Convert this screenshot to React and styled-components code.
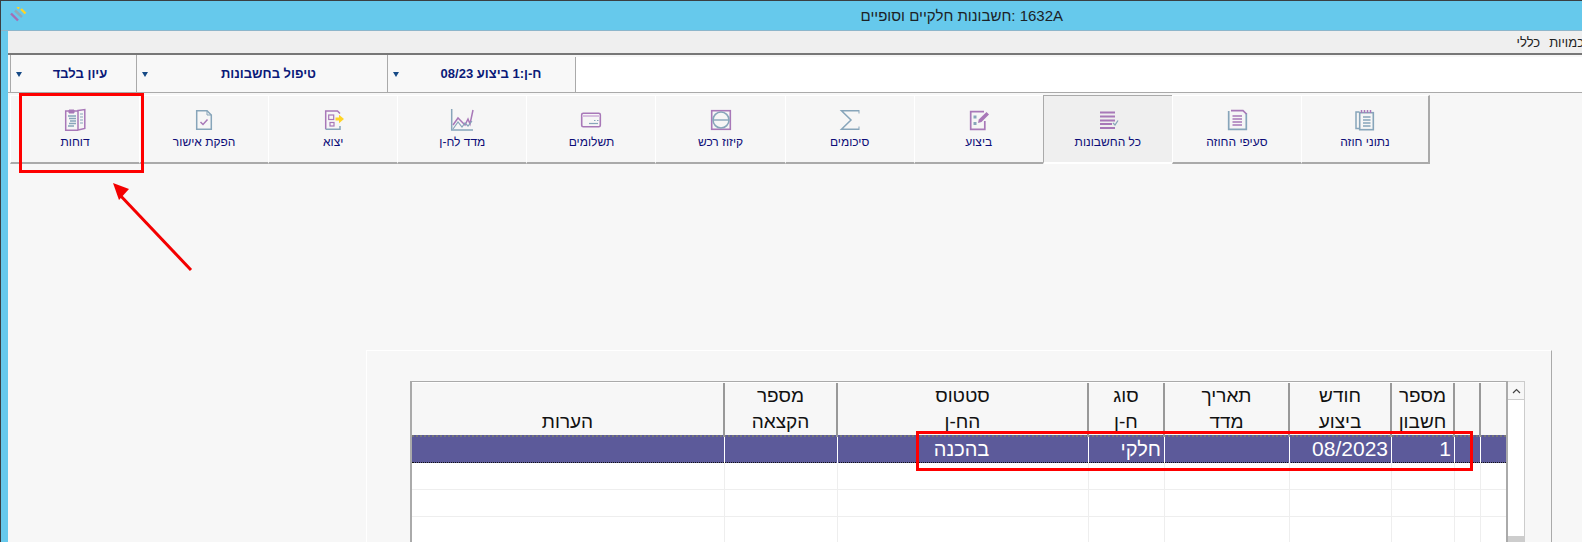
import React from 'react';
import styled, { createGlobalStyle } from 'styled-components';

const PURPLE = '#a878b8';
const STEEL = '#87a5ba';

const GlobalStyle = createGlobalStyle`
  html, body {
    margin: 0;
    padding: 0;
    background: #f7f7f7;
    font-family: "Liberation Sans", Arial, sans-serif;
  }
`;

const Icon = ({ children }) => (
  <svg width="24" height="24" viewBox="0 0 24 24" fill="none" strokeWidth="1.5">
    {children}
  </svg>
);

const ReportsIcon = () => (
  <Icon>
    <path d="M15 3H2.7V22.3H15" stroke={PURPLE} />
    <path d="M15 2.5L21.8 1.5V20.5L15 22Z" stroke={PURPLE} />
    <path d="M6 2H11V5H6Z" fill={PURPLE} stroke={PURPLE} strokeWidth="1" />
    <path d="M5 8H13M6 10.5H13M7 13H13M6 15.5H13M5 18H11" stroke={STEEL} />
    <path d="M17 6H20M17 9H20M17 12H20M17 15H20" stroke={STEEL} strokeWidth="1" />
  </Icon>
);

const ApprovalIcon = () => (
  <Icon>
    <path d="M4.7 2.7H15L19.3 7V21.3H4.7Z" stroke={STEEL} />
    <path d="M15 2.7V7H19.3" stroke={STEEL} strokeWidth="1" />
    <path d="M8.5 14L11 16.5L15.5 11.5" stroke={PURPLE} />
  </Icon>
);

const ExportIcon = () => (
  <Icon>
    <path d="M4.7 21.3V3H16.5L19 5.5" stroke={PURPLE} />
    <path d="M4.7 21.3H19V18" stroke={STEEL} />
    <rect x="7.7" y="7" width="5" height="4.5" stroke={PURPLE} strokeWidth="1.2" />
    <rect x="9" y="14.5" width="4" height="3.5" stroke={PURPLE} strokeWidth="1.2" />
    <path d="M14.5 9.5H18V6.8L23 11L18 15.2V12.5H14.5Z" fill="#ffd426" />
  </Icon>
);

const IndexIcon = () => (
  <Icon>
    <path d="M1.7 1V22H23" stroke={STEEL} />
    <path d="M3 17L8 10L12 14L15 17L18 11L20 16L23 2" stroke={PURPLE} />
    <path d="M3 21L8 14L12 19L15 15L18 18L22 13" stroke={STEEL} strokeWidth="1.2" />
  </Icon>
);

const PaymentsIcon = () => (
  <Icon>
    <rect x="2.7" y="5.2" width="18.6" height="13.6" rx="1.5" stroke={PURPLE} strokeWidth="1.6" />
    <path d="M3 8H21" stroke="#d8bfe0" strokeWidth="2" />
    <path d="M10 15.5H19" stroke={STEEL} strokeWidth="1.2" />
    <path d="M15 12.5H16.5M18 12.5H19.5" stroke={STEEL} strokeWidth="1.2" />
  </Icon>
);

const OffsetIcon = () => (
  <Icon>
    <rect x="2.7" y="2.7" width="18.6" height="18.6" stroke={PURPLE} strokeWidth="1.6" />
    <circle cx="12" cy="12" r="8" stroke={STEEL} strokeWidth="1.6" />
    <path d="M4 12H20" stroke={STEEL} strokeWidth="1.4" />
  </Icon>
);

const SumIcon = () => (
  <Icon>
    <path d="M21 2.7H3.5L13 12L3.5 21.3H21" stroke={STEEL} strokeWidth="1.5" />
    <path d="M21 2V5.5M21 18.5V22" stroke={STEEL} strokeWidth="1" />
  </Icon>
);

const ExecutionIcon = () => (
  <Icon>
    <path d="M17 3.7H3.7V21.3H17.8V13" stroke={PURPLE} strokeWidth="1.7" />
    <path d="M11 15L11.8 11.5L19.5 4L22 6.5L14.5 14Z" fill={PURPLE} />
    <rect x="6.5" y="7.5" width="3" height="3" fill={STEEL} />
    <rect x="6.5" y="14" width="3" height="3" fill={STEEL} />
  </Icon>
);

const AllAccountsIcon = () => (
  <Icon>
    <path d="M4 4.5H19M4 8.5H19M4 12.5H19M4 16H16M4 20H19" stroke={PURPLE} strokeWidth="2" />
    <path d="M17 15L19 17L22 12.5" stroke={STEEL} strokeWidth="1.3" />
  </Icon>
);

const SectionsIcon = () => (
  <Icon>
    <path d="M3.7 3V21.3H21.3V5" stroke={STEEL} strokeWidth="1.7" />
    <path d="M6 2.7H18L21.5 6" stroke={PURPLE} strokeWidth="1.7" />
    <path d="M7.5 8H17M7.5 11H17M7.5 14H17M7.5 17H17" stroke={PURPLE} strokeWidth="1.5" />
  </Icon>
);

const ContractIcon = () => (
  <Icon>
    <path d="M6.5 4H3V20.5H7" stroke={STEEL} strokeWidth="1.5" />
    <rect x="6.7" y="4.7" width="13.6" height="17" stroke={STEEL} strokeWidth="1.6" />
    <path d="M8.5 2V5M11.5 2V5M14.5 2V5M17.5 2V5" stroke={PURPLE} strokeWidth="1.5" />
    <path d="M10 9H17.5M10 12H17.5M10 15H17.5M10 18H17.5" stroke={STEEL} strokeWidth="1.3" />
  </Icon>
);

const TABS = [
  { label: 'דוחות', icon: <ReportsIcon /> },
  { label: 'הפקת אישור', icon: <ApprovalIcon /> },
  { label: 'יצוא', icon: <ExportIcon /> },
  { label: 'מדד לח-ן', icon: <IndexIcon /> },
  { label: 'תשלומים', icon: <PaymentsIcon /> },
  { label: 'קיזוז רכש', icon: <OffsetIcon /> },
  { label: 'סיכומים', icon: <SumIcon /> },
  { label: 'ביצוע', icon: <ExecutionIcon /> },
  { label: 'כל החשבונות', icon: <AllAccountsIcon />, active: true },
  { label: 'סעיפי החוזה', icon: <SectionsIcon /> },
  { label: 'נתוני חוזה', icon: <ContractIcon />, last: true },
];

const COLUMNS = [
  { head: 'הערות' },
  { head: 'מספר\nהקצאה' },
  { head: 'סטטוס\nהח-ן', value: 'בהכנה', center: true },
  { head: 'סוג\nח-ן', value: 'חלקי' },
  { head: 'תאריך\nמדד' },
  { head: 'חודש\nביצוע', value: '08/2023', digits: true },
  { head: 'מספר\nחשבון', value: '1', digits: true },
  { head: '' },
  { head: '' },
];

const App = () => {
  return (
    <>
      <GlobalStyle />
      <Window>
        <TitleBar>
          <svg width="18" height="16" viewBox="0 0 18 16">
            <path d="M1 6.5L8 13.5" stroke="#a56fb4" strokeWidth="2.4" />
            <path d="M5 3.5L12 10" stroke="#8fa8b8" strokeWidth="2.4" />
            <path d="M11 2L15.5 6.5" stroke="#ffd426" strokeWidth="2.4" />
            <path d="M7.5 1.5L9 0" stroke="#ffd426" strokeWidth="2.4" />
          </svg>
          <Title>1632A :חשבונות חלקיים וסופיים</Title>
        </TitleBar>
        <Body>
          <MenuBar>
            <MenuItem>כמויות</MenuItem>
            <MenuItem>כללי</MenuItem>
          </MenuBar>
          <Toolbar>
            <Select $width={126} $offset={13}>
              <Caret />
              <span>עיון בלבד</span>
            </Select>
            <Select $width={251} $offset={13}>
              <Caret />
              <span>טיפול בחשבונות</span>
            </Select>
            <Select $width={188} $offset={19}>
              <Caret />
              <span>ח-ן:1 ביצוע 08/23</span>
            </Select>
            <Blank />
          </Toolbar>
          <TabStrip>
            {TABS.map((tab) => (
              <Tab key={tab.label} $active={tab.active} $last={tab.last}>
                {tab.icon}
                <TabLabel>{tab.label}</TabLabel>
              </Tab>
            ))}
          </TabStrip>
          <Panel>
            <Table>
              <Grid>
                <HeaderRow>
                  {COLUMNS.map((col, i) => (
                    <HeaderCell key={i}>{col.head}</HeaderCell>
                  ))}
                </HeaderRow>
                <SelectedRow>
                  {COLUMNS.map((col, i) => (
                    <Cell key={i} $center={col.center} $digits={col.digits}>{col.value}</Cell>
                  ))}
                </SelectedRow>
                {[0, 1, 2].map((r) => (
                  <EmptyRow key={r}>
                    {COLUMNS.map((col, i) => (
                      <EmptyCell key={i} />
                    ))}
                  </EmptyRow>
                ))}
              </Grid>
              <ScrollBar>
                <ScrollButton>
                  <svg width="9" height="6" viewBox="0 0 9 6" fill="none">
                    <path d="M1 5L4.5 1.5L8 5" stroke="#444" strokeWidth="1.2" />
                  </svg>
                </ScrollButton>
                <ScrollTrack />
                <ScrollThumb />
              </ScrollBar>
            </Table>
          </Panel>
        </Body>
        <Mark $x={19} $y={93} $w={125} $h={80} $t={3} />
        <Mark $x={916} $y={431} $w={557} $h={40} $t={3} />
        <Arrow width="100" height="100" viewBox="0 0 100 100">
          <path d="M90 90L17 13" stroke="#f40000" strokeWidth="3" fill="none" />
          <path d="M12 3L28 9L18 20Z" fill="#f40000" />
        </Arrow>
      </Window>
    </>
  );
};

export default App;

const Window = styled.div`
  position: relative;
  width: 1582px;
  height: 542px;
  box-sizing: border-box;
  overflow: hidden;
  background: #66c9ec;
  border-top: 1px solid #3a3f42;
  border-left: 1px solid #3a3f42;
`;

const TitleBar = styled.div`
  height: 29px;
  box-sizing: content-box;
  display: flex;
  align-items: center;
  justify-content: space-between;
  padding-left: 9px;
  border-bottom: 1px solid #8db6cb;

  svg {
    margin-top: -2px;
  }
`;

const Title = styled.div`
  direction: rtl;
  margin-right: 519px;
  font-size: 15px;
  color: #1c2226;
`;

const Body = styled.div`
  margin-left: 7px;
  height: 511px;
  display: flex;
  flex-direction: column;
  background: #f7f7f7;
`;

const MenuBar = styled.div`
  height: 22px;
  flex: none;
  display: flex;
  justify-content: flex-start;
  align-items: center;
  gap: 12px;
  overflow: hidden;
  background: #efefef;
  direction: rtl;
`;

const MenuItem = styled.span`
  font-size: 13px;
  color: #222;
  &:first-child {
    margin-right: -2px;
  }
  &:last-child {
    margin-right: -3px;
  }
`;

const Toolbar = styled.div`
  height: 35px;
  flex: none;
  display: flex;
  padding-top: 2px;
  padding-left: 2px;
  border-top: 2px solid #777;
  border-bottom: 1px solid #aaa;
`;

const Select = styled.div`
  width: ${(p) => p.$width}px;
  box-sizing: border-box;
  flex: none;
  display: flex;
  align-items: center;
  justify-content: center;
  position: relative;
  padding-left: ${(p) => p.$offset}px;
  margin-top: -2px;
  border-left: 1px solid #aaa;
  background: #f8f8f8;
  font-size: 13px;
  font-weight: 700;
  color: #0b1a78;
  direction: rtl;
`;

const Caret = styled.i`
  position: absolute;
  left: 5px;
  top: 17px;
  width: 0;
  height: 0;
  border-left: 3.5px solid transparent;
  border-right: 3.5px solid transparent;
  border-top: 5px solid #164a86;
`;

const Blank = styled.div`
  flex: 1;
  background: #fff;
  border-left: 1px solid #aaa;
`;

const TabStrip = styled.div`
  flex: none;
  display: flex;
  width: 1420px;
  margin: 2px 0 0 2px;
`;

const Tab = styled.div`
  width: 129.1px;
  height: 69px;
  box-sizing: border-box;
  flex: none;
  display: flex;
  flex-direction: column;
  align-items: center;
  padding-top: 12px;
  direction: rtl;
  background: ${(p) => (p.$active ? '#efefef' : '#f6f6f6')};
  border-top: 1px solid ${(p) => (p.$active ? '#aaa' : '#fff')};
  border-left: 1px solid ${(p) => (p.$active ? '#aaa' : '#fff')};
  border-right: ${(p) => (p.$last ? '2px solid #aaa' : 'none')};
  border-bottom: 2px solid ${(p) => (p.$active ? '#fff' : '#aaa')};
`;

const TabLabel = styled.span`
  margin-top: 3px;
  font-size: 12px;
  line-height: 15px;
  color: #0d0d78;
`;

const Panel = styled.div`
  flex: none;
  width: 1186px;
  margin: 186px 0 0 358px;
  padding: 30px 0 0 43px;
  box-sizing: border-box;
  height: 300px;
  border-top: 1px solid #fff;
  border-left: 1px solid #fff;
  border-right: 1px solid #aaa;
`;

const Table = styled.div`
  display: flex;
  width: 1115px;
`;

const Grid = styled.div`
  width: 1098px;
  flex: none;
  box-sizing: border-box;
  border-left: 2px solid #aaa;
  border-right: 2px solid #aaa;
  border-top: 1px solid #aaa;
  background: #fff;
`;

const ROW_COLUMNS = '313px 113px 251px 76px 125px 102px 63px 26px 25px';

const HeaderRow = styled.div`
  display: grid;
  grid-template-columns: ${ROW_COLUMNS};
  height: 53px;
  box-sizing: border-box;
  padding: 0 0 3px;
  border-top: 1px solid #fff;
  background: #f7f7f7;
`;

const HeaderCell = styled.div`
  display: flex;
  align-items: flex-end;
  justify-content: center;
  text-align: center;
  white-space: pre-line;
  direction: rtl;
  font-size: 19px;
  line-height: 26px;
  color: #111;
  border-right: 2px solid #999;
  margin-bottom: -2px;
  padding-bottom: 2px;
  &:last-child {
    border-right: none;
  }
`;

const SelectedRow = styled.div`
  display: grid;
  grid-template-columns: ${ROW_COLUMNS};
  height: 28px;
  box-sizing: border-box;
  background: #5c5a9a;
  border-top: 2px dotted #777;
  border-bottom: 1px dotted #111;
`;

const Cell = styled.div`
  display: flex;
  align-items: center;
  justify-content: ${(p) => (p.$center ? 'center' : 'flex-start')};
  padding: 0 3px 3px 0;
  direction: rtl;
  font-size: ${(p) => (p.$digits ? '21px' : '20px')};
  color: #fff;
  border-right: 1px solid #fff;
  &:last-child {
    border-right: none;
  }
`;

const EmptyRow = styled.div`
  display: grid;
  grid-template-columns: ${ROW_COLUMNS};
  height: 27px;
  box-sizing: border-box;
  border-bottom: 1px solid #eee;
`;

const EmptyCell = styled.div`
  border-right: 1px solid #eee;
  &:last-child {
    border-right: none;
  }
`;

const ScrollBar = styled.div`
  width: 17px;
  box-sizing: border-box;
  flex: none;
  display: flex;
  flex-direction: column;
  border-right: 1px solid #ccc;
  border-top: 1px solid #ccc;
  background: #fff;
`;

const ScrollButton = styled.div`
  height: 17px;
  flex: none;
  display: flex;
  align-items: center;
  justify-content: center;
  background: #f7f7f7;
  border-bottom: 1px solid #ccc;
`;

const ScrollTrack = styled.div`
  height: 136px;
  flex: none;
`;

const ScrollThumb = styled.div`
  height: 20px;
  flex: none;
  background: #cdcdcd;
`;

const Mark = styled.div`
  position: absolute;
  left: ${(p) => p.$x - 1}px;
  top: ${(p) => p.$y - 1}px;
  width: ${(p) => p.$w}px;
  height: ${(p) => p.$h}px;
  box-sizing: border-box;
  border: ${(p) => p.$t}px solid #fe0000;
`;

const Arrow = styled.svg`
  position: absolute;
  left: 100px;
  top: 179px;
`;
